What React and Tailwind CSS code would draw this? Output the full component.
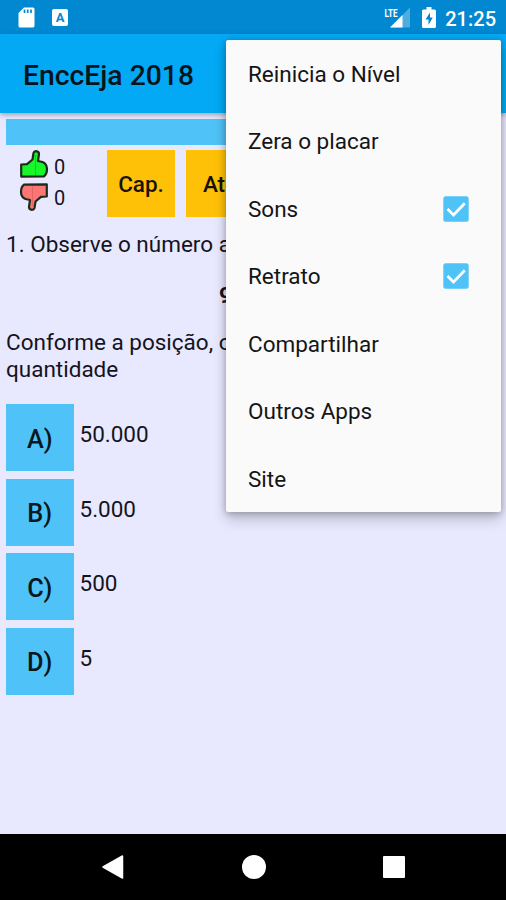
import React from "react";

const answers = [
    { letter: "A)", text: "50.000" },
    { letter: "B)", text: "5.000" },
    { letter: "C)", text: "500" },
    { letter: "D)", text: "5" },
];

const menuItems = [
    { label: "Reinicia o Nível" },
    { label: "Zera o placar" },
    { label: "Sons", checked: true },
    { label: "Retrato", checked: true },
    { label: "Compartilhar" },
    { label: "Outros Apps" },
    { label: "Site" },
];

function Thumb({ fill, shine, down }) {
    return (
        <svg
            width="30"
            height="30"
            viewBox="0 0 30 30"
            className={down ? "rotate-180 shrink-0" : "shrink-0"}
        >
            <path
                d="M2.2 14.5 L8 14.2 L13.5 9.5 L14.5 3 Q15 1.2 17 1.2 Q20 1.5 20 4 L19 11 L23.5 12 Q28 14 28 19 Q28 24 25 26.3 L2.2 26.6 Z"
                fill={fill}
                stroke="#1c2b1c"
                strokeWidth="2.2"
                strokeLinejoin="round"
            />
            <path d="M16.5 5 V25" stroke={shine} strokeWidth="0.8" fill="none" />
        </svg>
    );
}

function StatusBar() {
    return (
        <div className="flex h-[34px] shrink-0 items-center justify-between bg-[#0288d1] pt-px pr-[10px] pl-[18px] text-white">
            <div className="flex items-center gap-[17px]">
                <svg width="17" height="21" viewBox="0 0 17 21">
                    <path d="M6 0.5 H15 Q16.5 0.5 16.5 2 V18.5 Q16.5 20.5 15 20.5 H2 Q0.5 20.5 0.5 19 V6 Z" fill="#fff" />
                    <path d="M6.5 2.5 V6 M9.7 2.5 V6 M13 2.5 V6" stroke="#0288d1" strokeWidth="1.7" />
                </svg>
                <div className="flex h-[17px] w-[16px] items-center justify-center rounded-[2px] bg-white text-[13px] leading-none font-bold text-[#0288d1]">
                    A
                </div>
            </div>
            <div className="flex items-center">
                <svg width="27" height="21" viewBox="0 0 27 21" className="mr-[11px] overflow-visible">
                    <path d="M6 20.5 L26 0.5 V20.5 Z" fill="#fff" fillOpacity="0.3" />
                    <path d="M6 20.5 L18.5 8 V20.5 Z" fill="#fff" />
                    <text x="0.5" y="9.5" fontSize="11.5" fontWeight="700" textLength="13" lengthAdjust="spacingAndGlyphs" fill="#fff">LTE</text>
                </svg>
                <svg width="14" height="21" viewBox="0 0 14 21" className="mr-[9px]">
                    <path d="M4.5 0 H9.5 V2.5 H12.5 Q14 2.5 14 4 V19.5 Q14 21 12.5 21 H1.5 Q0 21 0 19.5 V4 Q0 2.5 1.5 2.5 H4.5 Z" fill="#fff" />
                    <path d="M8 5.5 L3.5 12.5 H6.5 V18 L10.8 10.5 H8 Z" fill="#0288d1" />
                </svg>
                <span className="pt-[2px] text-[20px] leading-none font-medium">21:25</span>
            </div>
        </div>
    );
}

function OverflowMenu() {
    return (
        <div className="absolute top-[40px] left-[226px] h-[472px] w-[275px] rounded-[2px] bg-[#fafafa] shadow-[0_8px_14px_rgba(0,0,0,0.18),0_1px_7px_rgba(0,0,0,0.28)]">
            {menuItems.map((item) => (
                <div
                    key={item.label}
                    className="flex h-[67.5px] items-center justify-between pr-8 pl-[22px] text-[22.5px] text-[#151515]"
                >
                    <span className="pt-[2px]">{item.label}</span>
                    {item.checked && (
                        <svg width="26" height="26" viewBox="0 0 26 26">
                            <rect x="0.3" y="0.3" width="25.4" height="25.4" rx="2.5" fill="#4fc3f7" />
                            <path d="M4.5 13 L10.5 19 L21.8 7.2" stroke="#fff" strokeWidth="2.7" fill="none" />
                        </svg>
                    )}
                </div>
            ))}
        </div>
    );
}

function App() {
    return (
        <div className="relative flex h-[900px] w-[506px] flex-col overflow-hidden bg-[#e8e8ff] font-[Roboto,sans-serif] text-[#14141c]">
            <StatusBar />

            <header className="z-0 flex h-[78.5px] shrink-0 items-center bg-[#03a9f4] pt-[6px] pl-[23px] shadow-[0_2px_5px_rgba(0,0,0,0.3)]">
                <h1 className="text-[28.3px] font-medium text-[#04141c]">EnccEja 2018</h1>
            </header>

            <main className="flex-1 px-[6px] pt-[6px]">
                <div className="h-[26.5px] bg-[#4fc3f7]" />

                {/* Score and top buttons */}
                <div className="flex pt-[4.5px]">
                    <div className="w-[101px] pl-[13px] text-[20px]">
                        <div className="flex h-[31px] items-center gap-[5px]">
                            <Thumb fill="#17f52b" shine="#0fbd22" />
                            <span className="pt-[3px]">0</span>
                        </div>
                        <div className="flex h-[31px] items-center gap-[5px]">
                            <Thumb fill="#fc7676" shine="#e06060" down />
                            <span className="pt-[3px]">0</span>
                        </div>
                    </div>
                    <div className="flex gap-[11px] text-[22.5px] font-medium text-[#181206]">
                        <div className="flex h-[67px] w-[68px] items-center justify-center bg-[#ffc107] pt-[3px]">Cap.</div>
                        <div className="flex h-[67px] w-[68px] items-center justify-center bg-[#ffc107] pt-[3px]">Ati.</div>
                    </div>
                </div>

                {/* Question */}
                <div className="pt-[14px] text-[22.5px] leading-[27px]">
                    <p>1. Observe o número a</p>
                    <p className="pt-[24px] pl-[213px] font-bold">9</p>
                    <p className="pt-[20px]">
                        Conforme a posição, o
                        <br />
                        quantidade
                    </p>
                </div>

                {/* Answers */}
                <div className="flex flex-col gap-[7.5px] pt-[21.5px]">
                    {answers.map((a) => (
                        <div key={a.letter} className="flex gap-[6px]">
                            <div className="flex h-[67px] w-[67.5px] items-center justify-center bg-[#4fc3f7] pt-[4px] text-[25.3px] font-medium text-[#08161d]">
                                {a.letter}
                            </div>
                            <span className="pt-[17px] text-[22.5px] leading-[27px]">{a.text}</span>
                        </div>
                    ))}
                </div>
            </main>

            <nav className="flex h-[66.5px] shrink-0 items-center justify-between bg-black pr-[101px] pl-[102px]">
                <svg width="22" height="26" viewBox="0 0 22 26">
                    <path d="M1 13 L20.5 2 V24 Z" fill="#fff" stroke="#fff" strokeWidth="1.5" strokeLinejoin="round" />
                </svg>
                <div className="h-6 w-6 rounded-full bg-white" />
                <div className="h-[22px] w-[22px] rounded-[1px] bg-white" />
            </nav>

            <OverflowMenu />
        </div>
    );
}

export default App;
